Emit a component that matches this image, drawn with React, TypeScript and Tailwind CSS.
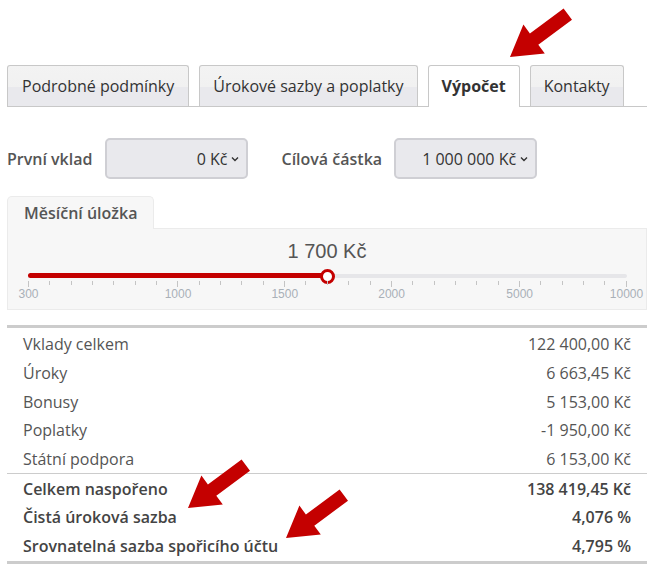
import React from 'react';

const tabs = [
  { label: 'Podrobné podmínky', active: false, pad: 'px-[14px]' },
  { label: 'Úrokové sazby a poplatky', active: false, pad: 'px-[13px]' },
  { label: 'Výpočet', active: true, pad: 'px-[13px]' },
  { label: 'Kontakty', active: false, pad: 'px-[13px]' },
];

const tickCount = 29;
const tickStep = 598 / (tickCount - 1);
const labels: Record<number, string> = {
  0: '300',
  7: '1000',
  12: '1500',
  17: '2000',
  23: '5000',
  28: '10000',
};
const thumbIndex = 14;

const rows = [
  { label: 'Vklady celkem', value: '122 400,00 Kč' },
  { label: 'Úroky', value: '6 663,45 Kč' },
  { label: 'Bonusy', value: '5 153,00 Kč' },
  { label: 'Poplatky', value: '-1 950,00 Kč' },
  { label: 'Státní podpora', value: '6 153,00 Kč' },
];

const totals = [
  { label: 'Celkem naspořeno', value: '138 419,45 Kč' },
  { label: 'Čistá úroková sazba', value: '4,076 %' },
  { label: 'Srovnatelná sazba spořicího účtu', value: '4,795 %' },
];

function Arrow({ className }: { className: string }) {
  return (
    <svg
      className={`absolute pointer-events-none ${className}`}
      width="72"
      height="56"
      viewBox="0 0 72 56"
    >
      <polygon
        points="5,52 39.8,48.6 33.3,39.7 67,14.7 58.6,3.5 24.9,28.5 18.4,19.6"
        fill="#c40000"
      />
    </svg>
  );
}

function Select({ value }: { value: string }) {
  return (
    <div className="w-[143px] h-[41px] rounded-[5px] border-2 border-[#cfcfd4] bg-[#e9e9ed] flex items-center justify-end pr-[7px] gap-[4px] text-[16px] text-[#333]">
      <span>{value}</span>
      <svg width="8" height="6" viewBox="0 0 8 6">
        <polyline points="1,1.5 4,4.5 7,1.5" fill="none" stroke="#333" strokeWidth="1.4" />
      </svg>
    </div>
  );
}

export default function App() {
  return (
    <div className="relative w-full h-[570px] bg-white px-[7px] pt-[65px] font-['Open_Sans',sans-serif] overflow-hidden">
      <div className="w-[640px] flex items-end gap-[10px] border-b border-[#c8c8c8] h-[42px]">
        {tabs.map((tab) =>
          tab.active ? (
            <div
              key={tab.label}
              className={`h-[42px] -mb-px ${tab.pad} pb-[2px] flex items-center border border-b-0 border-[#c8c8c8] rounded-t-[3px] bg-white text-[16px] font-bold text-[#333] whitespace-nowrap`}
            >
              {tab.label}
            </div>
          ) : (
            <div
              key={tab.label}
              className={`h-[41px] ${tab.pad} flex items-center border border-b-0 border-[#c8c8c8] rounded-t-[3px] bg-[linear-gradient(#f3f3f3_0%,#f1f1f1_52%,#e9e9ed_52%,#e9e9ed_100%)] text-[16px] text-[#333] whitespace-nowrap`}
            >
              {tab.label}
            </div>
          )
        )}
      </div>

      <div className="mt-[31px] h-[41px] flex items-center">
        <span className="text-[16px] font-semibold text-[#555]">První vklad</span>
        <div className="ml-[13px]">
          <Select value="0 Kč" />
        </div>
        <span className="ml-[33px] text-[16px] font-semibold text-[#555]">Cílová částka</span>
        <div className="ml-[12px]">
          <Select value="1 000 000 Kč" />
        </div>
      </div>

      <div className="mt-[17px] w-[640px]">
        <div className="relative z-10 -mb-px w-fit h-[33px] px-[16px] flex items-center border border-b-0 border-[#ebebeb] rounded-t-[5px] bg-[#f7f7f7] text-[16px] font-semibold text-[#555] whitespace-nowrap">
          Měsíční úložka
        </div>
        <div className="h-[82px] border border-[#ebebeb] bg-[#f7f7f7]">
          <div className="pt-[10px] h-[34px] text-center text-[20px] leading-[24px] text-[#555] font-['Liberation_Sans',Arial,sans-serif]">
            1 700 Kč
          </div>
          <div className="relative ml-[20px] w-[599px] h-[45px]">
            <div className="absolute left-0 right-0 top-[11px] h-[4px] rounded-full bg-[#e6e6e9]" />
            <div
              className="absolute left-0 top-[10px] h-[5px] rounded-full bg-[#c40000]"
              style={{ width: thumbIndex * tickStep }}
            />
            <div
              className="absolute top-[6px] w-[15px] h-[15px] -ml-[7px] rounded-full border-[3px] border-[#c40000] bg-white"
              style={{ left: thumbIndex * tickStep }}
            />
            <div className="absolute left-0 right-0 top-[18px] flex justify-between items-start">
              {Array.from({ length: tickCount }).map((_, i) => (
                <div
                  key={i}
                  className={`w-px bg-[#c4c4c4] ${labels[i] ? 'h-[6px]' : 'h-[4px]'}`}
                />
              ))}
            </div>
            {Object.entries(labels).map(([idx, text]) => (
              <div
                key={idx}
                className="absolute top-[24px] -translate-x-1/2 text-[12px] leading-[14px] text-[#a9b0b7] font-['Liberation_Sans',Arial,sans-serif]"
                style={{ left: Number(idx) * tickStep + 0.5 }}
              >
                {text}
              </div>
            ))}
          </div>
        </div>
      </div>

      <div className="mt-[15px] w-[640px] border-t-[3px] border-b-[3px] border-[#cccccc] text-[16px]">
        <div className="pt-[2px]">
          {rows.map((r) => (
            <div key={r.label} className="h-[28.7px] px-[16px] flex items-center justify-between text-[#555]">
              <span>{r.label}</span>
              <span>{r.value}</span>
            </div>
          ))}
        </div>
        <div className="border-t border-[#cccccc]">
          {totals.map((r) => (
            <div
              key={r.label}
              className="h-[28.7px] px-[16px] flex items-center justify-between font-semibold text-[#444]"
            >
              <span>{r.label}</span>
              <span>{r.value}</span>
            </div>
          ))}
        </div>
      </div>

      <Arrow className="left-[505px] top-[5px]" />
      <Arrow className="left-[183px] top-[456px]" />
      <Arrow className="left-[281px] top-[486px]" />
    </div>
  );
}
